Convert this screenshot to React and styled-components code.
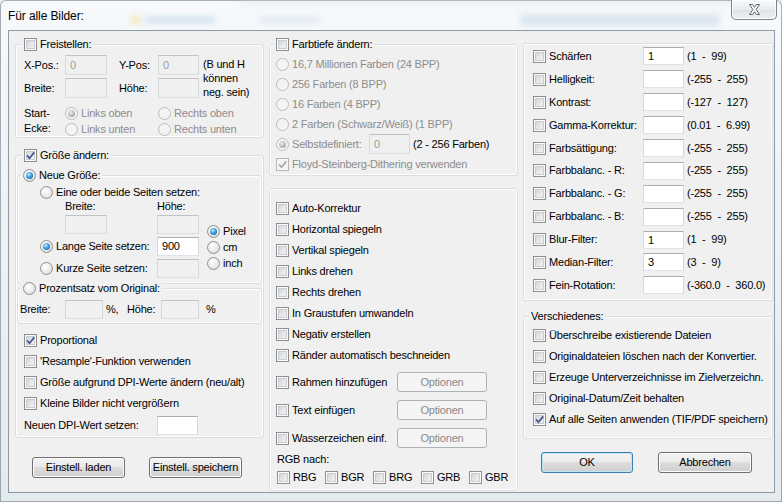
import React from 'react';
import styled, { createGlobalStyle } from 'styled-components';

const GlobalStyle = createGlobalStyle`
  html, body { margin: 0; padding: 0; }
  body {
    font-family: "Liberation Sans", Arial, sans-serif;
    font-size: 11px;
    line-height: 13px;
    letter-spacing: -0.2px;
    color: #000;
    background: #e9eef2;
  }
`;

const Window = styled.div`
    position: relative;
    width: 782px;
    height: 502px;
    overflow: hidden;
    border-radius: 6px 6px 0 0;
    background: linear-gradient(180deg, #f7f9fb 0%, #eef3f6 40%, #e3ebef 100%);
    box-shadow: inset 0 0 0 1px rgba(70, 80, 90, 0.45);
    display: flex;
    flex-direction: column;
`;

const Backdrop = styled.div`
    position: absolute;
    inset: 0 0 auto 0;
    height: 30px;
    pointer-events: none;
`;

const Blur = styled.span`
    position: absolute;
    left: ${(p) => p.$x}px;
    top: ${(p) => p.$y}px;
    width: ${(p) => p.$w}px;
    height: ${(p) => p.$h}px;
    background: ${(p) => p.$c};
    filter: blur(3px);
    opacity: 0.5;
`;

const TitleBar = styled.div`
    position: relative;
    height: 30px;
    display: flex;
    align-items: flex-start;
    justify-content: space-between;
    padding-left: 8px;
    flex: none;
`;

const Title = styled.div`
    margin-top: 9px;
    font-size: 12px;
    line-height: 14px;
    letter-spacing: -0.1px;
`;

const CloseButton = styled.div`
    box-sizing: border-box;
    width: 46px;
    height: 20px;
    margin-right: 5px;
    border: 1px solid #7d8590;
    border-top: none;
    border-radius: 0 0 5px 5px;
    background: linear-gradient(180deg, #f8f9fa 0%, #e9ecef 50%, #dde2e7 51%, #eef1f4 100%);
    box-shadow: inset 0 0 0 1px rgba(255, 255, 255, 0.8);
    display: flex;
    align-items: center;
    justify-content: center;
`;

const Client = styled.div`
    box-sizing: border-box;
    height: 463px;
    margin: 0 7px 0 8px;
    border: 1px solid #8e9aa6;
    background: #f0f0f0;
    display: grid;
    grid-template-columns: 249px 249px 250px;
    column-gap: 5px;
    padding-left: 6px;
    align-items: start;
`;

const Column = styled.div`
    display: flex;
    flex-direction: column;
    padding-top: ${(p) => p.$pt}px;
`;

const Group = styled.div`
    box-sizing: border-box;
    height: ${(p) => p.$h}px;
    margin: ${(p) => p.$m || '0'};
    padding-top: ${(p) => p.$pt || 0}px;
    border: 1px solid #d5dfe5;
    border-radius: 3px;
    box-shadow: inset 0 0 0 1px #ffffff;
    display: flex;
    flex-direction: column;
    flex: none;
`;

const Legend = styled.div`
    display: flex;
    align-items: center;
    height: 14px;
    width: fit-content;
    margin: -8px 0 0 ${(p) => p.$ml}px;
    padding: 0 2px;
    background: #f0f0f0;
    white-space: nowrap;
`;

const Stack = styled.div`
    display: flex;
    flex-direction: column;
    margin-top: ${(p) => p.$mt || 0}px;
    padding-left: ${(p) => p.$pl || 0}px;
    padding-top: ${(p) => p.$pt || 0}px;
`;

const Line = styled.div`
    display: flex;
    align-items: center;
    height: ${(p) => p.$h}px;
    margin-top: ${(p) => p.$mt || 0}px;
    padding-left: ${(p) => p.$pl || 0}px;
    flex: none;
`;

const Choice = styled.span`
    display: inline-flex;
    align-items: center;
    gap: 3px;
    white-space: nowrap;
    color: ${(p) => (p.$off ? '#8d8d8d' : '#000')};
    width: ${(p) => (p.$w ? `${p.$w}px` : 'auto')};
    grid-area: ${(p) => p.$area || 'auto'};
    flex: none;
`;

const Box = styled.span`
    box-sizing: border-box;
    width: 13px;
    height: 13px;
    flex: none;
    border: 1px solid ${(p) => (p.$off ? '#b5b5b5' : '#8e8f8f')};
    background: ${(p) =>
        p.$off ? '#f4f4f4' : 'linear-gradient(135deg, #c5c9cf 0%, #e2e4e7 45%, #f8f8f8 100%)'};
    box-shadow: ${(p) =>
        p.$off ? 'inset 0 0 0 1px #f7f7f7' : 'inset 0 0 0 1px #fbfbfb, inset 0 0 0 2px #c9ccd1'};
    display: flex;
    align-items: center;
    justify-content: center;
`;

const Dot = styled.span`
    box-sizing: border-box;
    width: 13px;
    height: 13px;
    flex: none;
    border-radius: 50%;
    border: 1px solid ${(p) => (p.$off ? '#bcbcbc' : '#8e8f8f')};
    background: ${(p) =>
        p.$off ? '#f4f4f4' : 'radial-gradient(circle at 40% 35%, #ffffff 0%, #ececec 50%, #cfd1d4 100%)'};
    display: flex;
    align-items: center;
    justify-content: center;

    &::after {
        content: '';
        display: ${(p) => (p.$on ? 'block' : 'none')};
        width: 7px;
        height: 7px;
        border-radius: 50%;
        background: ${(p) =>
            p.$off
                ? 'radial-gradient(circle at 40% 35%, #eeeeee 0%, #b4b4b4 60%, #8f8f8f 100%)'
                : 'radial-gradient(circle at 40% 35%, #c6ecff 0%, #3f9ede 45%, #154f8c 100%)'};
    }
`;

const Field = styled.input.attrs({ readOnly: true })`
    box-sizing: border-box;
    width: ${(p) => p.$w}px;
    height: ${(p) => p.$h || 20}px;
    margin: 0 0 0 ${(p) => p.$ml || 0}px;
    padding: 0 0 0 4px;
    font: inherit;
    letter-spacing: inherit;
    color: ${(p) => (p.$off ? '#9a9a9a' : '#000')};
    border: 1px solid;
    border-color: ${(p) =>
        p.$off ? '#bfc3c7 #d6d9dc #dcdfe2 #d6d9dc' : '#abadb3 #d5d8dd #dfe3e8 #d5d8dd'};
    background: ${(p) => (p.$off ? '#f0f0f0' : '#ffffff')};
    border-radius: 0;
    outline: none;
    flex: none;
    grid-area: ${(p) => p.$area || 'auto'};
    align-self: center;
`;

const Btn = styled.button`
    box-sizing: border-box;
    width: ${(p) => p.$w}px;
    height: ${(p) => p.$h || 21}px;
    margin: 0 0 0 ${(p) => p.$ml || 0}px;
    padding: 0;
    font: inherit;
    letter-spacing: inherit;
    color: ${(p) => (p.$off ? '#8a8a8a' : '#000')};
    border: 1px solid ${(p) => (p.$off ? '#adb2b5' : p.$default ? '#3c7fb1' : '#707070')};
    border-radius: 3px;
    background: ${(p) =>
        p.$off ? '#f4f4f4' : 'linear-gradient(180deg, #f2f2f2 0%, #ebebeb 49%, #dddddd 50%, #cfcfcf 100%)'};
    box-shadow: inset 0 0 0 1px ${(p) => (p.$off ? '#f4f4f4' : p.$default ? '#bfe6f8' : '#fcfcfc')};
    flex: none;
`;

const ButtonRow = styled.div`
    display: flex;
    gap: ${(p) => p.$gap}px;
    margin-top: ${(p) => p.$mt}px;
    padding-left: ${(p) => p.$pl}px;
`;

const Cell = styled.span`
    grid-area: ${(p) => p.$area || 'auto'};
    white-space: nowrap;
    width: ${(p) => (p.$w ? `${p.$w}px` : 'auto')};
    padding-left: ${(p) => p.$pl || 0}px;
    flex: none;
`;

const CropGrid = styled.div`
    display: grid;
    margin-top: 4px;
    padding-left: 8px;
    grid-template-columns: 41px 42px 12px 39px 41px 1fr;
    grid-template-rows: 20px 20px;
    row-gap: 3px;
    grid-template-areas:
        'xl xi . yl yi note'
        'bl bi . hl hi note';
    align-items: center;
`;

const Note = styled.div`
    grid-area: note;
    align-self: start;
    padding: 2px 0 0 4px;
    line-height: 14px;
    white-space: nowrap;
`;

const StartGrid = styled.div`
    display: grid;
    margin-top: 7px;
    padding-left: 8px;
    grid-template-columns: 41px 93px 1fr;
    grid-template-rows: 16px 16px;
    grid-template-areas:
        'lbl lo ro'
        'lbl lu ru';
    align-items: center;
`;

const StartLabel = styled.div`
    grid-area: lbl;
    line-height: 15px;
    align-self: start;
    padding-top: 1px;
`;

const SizeGrid = styled.div`
    display: grid;
    margin-top: 3px;
    padding-left: 22px;
    grid-template-columns: 25px 92px 42px 8px 1fr;
    grid-template-rows: 14px 14px 22px 22px 22px;
    grid-template-areas:
        'one one one one one'
        '. bl hl . .'
        '. bi hi . units'
        'long long li . units'
        'short short si . units';
    align-items: center;
`;

const Units = styled.div`
    grid-area: units;
    align-self: start;
    display: flex;
    flex-direction: column;
    padding-top: 10px;
`;

const UnitLine = styled.div`
    height: 16px;
    display: flex;
    align-items: center;
`;

const Sub = styled(Group)`
    margin: ${(p) => p.$mt}px 1px 0 1px;
`;

const Caption = styled.div`
    height: ${(p) => p.$h}px;
    display: flex;
    align-items: center;
    padding-left: ${(p) => p.$pl}px;
`;

const Tick = ({ off }) => (
    <svg width="9" height="9" viewBox="0 0 9 9">
        <path
            d="M1 4.4 L3.5 7.2 L8.2 1.4"
            fill="none"
            stroke={off ? '#a9a9a9' : '#42558a'}
            strokeWidth="1.7"
        />
    </svg>
);

const Check = ({ on, off, w, area, children }) => (
    <Choice $off={off} $w={w} $area={area}>
        <Box $off={off}>{on && <Tick off={off} />}</Box>
        {children}
    </Choice>
);

const Radio = ({ on, off, w, area, children }) => (
    <Choice $off={off} $w={w} $area={area}>
        <Dot $on={on} $off={off} />
        {children}
    </Choice>
);

const CloseGlyph = () => (
    <svg width="13" height="11" viewBox="0 0 13 11">
        <path
            d="M1.5 0.5 L4.6 0.5 L6.5 3.3 L8.4 0.5 L11.5 0.5 L8.1 5.5 L11.5 10.5 L8.4 10.5 L6.5 7.7 L4.6 10.5 L1.5 10.5 L4.9 5.5 Z"
            fill="#ffffff"
            stroke="#5d6672"
            strokeWidth="1"
            strokeLinejoin="round"
        />
    </svg>
);

const filters = [
    ['Schärfen', '1', '(1  -  99)'],
    ['Helligkeit:', '', '(-255  -  255)'],
    ['Kontrast:', '', '(-127  -  127)'],
    ['Gamma-Korrektur:', '', '(0.01  -  6.99)'],
    ['Farbsättigung:', '', '(-255  -  255)'],
    ['Farbbalanc. - R:', '', '(-255  -  255)'],
    ['Farbbalanc. - G:', '', '(-255  -  255)'],
    ['Farbbalanc. - B:', '', '(-255  -  255)'],
    ['Blur-Filter:', '1', '(1  -  99)'],
    ['Median-Filter:', '3', '(3  -  9)'],
    ['Fein-Rotation:', '', '(-360.0  -  360.0)'],
];

const actions = [
    'Auto-Korrektur',
    'Horizontal spiegeln',
    'Vertikal spiegeln',
    'Links drehen',
    'Rechts drehen',
    'In Graustufen umwandeln',
    'Negativ erstellen',
    'Ränder automatisch beschneiden',
];

const depths = [
    '16,7 Millionen Farben (24 BPP)',
    '256 Farben (8 BPP)',
    '16 Farben (4 BPP)',
    '2 Farben (Schwarz/Weiß) (1 BPP)',
];

const misc = [
    ['Überschreibe existierende Dateien', false],
    ['Originaldateien löschen nach der Konvertier.', false],
    ['Erzeuge Unterverzeichnisse im Zielverzeichn.', false],
    ['Original-Datum/Zeit behalten', false],
    ['Auf alle Seiten anwenden (TIF/PDF speichern)', true],
];

const App = () => {
    return (
        <>
            <GlobalStyle />
            <Window>
                <Backdrop>
                    <Blur $x={132} $y={16} $w={8} $h={8} $c="#e8d46a" />
                    <Blur $x={145} $y={17} $w={70} $h={6} $c="#a9c6e6" />
                    <Blur $x={260} $y={17} $w={60} $h={6} $c="#c7d6e6" />
                    <Blur $x={520} $y={14} $w={200} $h={12} $c="#c2d4e6" />
                    <Blur $x={240} $y={0} $w={540} $h={4} $c="#d5dde6" />
                </Backdrop>
                <TitleBar>
                    <Title>Für alle Bilder:</Title>
                    <CloseButton>
                        <CloseGlyph />
                    </CloseButton>
                </TitleBar>
                <Client>
                    {/* left column */}
                    <Column $pt={13}>
                        <Group $h={94}>
                            <Legend $ml={6}>
                                <Check>Freistellen:</Check>
                            </Legend>
                            <CropGrid>
                                <Cell $area="xl">X-Pos.:</Cell>
                                <Field $area="xi" $w={42} $off defaultValue="0" />
                                <Cell $area="yl">Y-Pos:</Cell>
                                <Field $area="yi" $w={41} $off defaultValue="0" />
                                <Note>
                                    (B und H
                                    <br />
                                    können
                                    <br />
                                    neg. sein)
                                </Note>
                                <Cell $area="bl">Breite:</Cell>
                                <Field $area="bi" $w={42} $off defaultValue="" />
                                <Cell $area="hl">Höhe:</Cell>
                                <Field $area="hi" $w={41} $off defaultValue="" />
                            </CropGrid>
                            <StartGrid>
                                <StartLabel>
                                    Start-
                                    <br />
                                    Ecke:
                                </StartLabel>
                                <Radio area="lo" on off>
                                    Links oben
                                </Radio>
                                <Radio area="ro" off>
                                    Rechts oben
                                </Radio>
                                <Radio area="lu" off>
                                    Links unten
                                </Radio>
                                <Radio area="ru" off>
                                    Rechts unten
                                </Radio>
                            </StartGrid>
                        </Group>

                        <Group $h={283} $m="17px 0 0 0">
                            <Legend $ml={6}>
                                <Check on>Größe ändern:</Check>
                            </Legend>
                            <Sub $h={109} $mt={13}>
                                <Legend $ml={3}>
                                    <Radio on>Neue Größe:</Radio>
                                </Legend>
                                <SizeGrid>
                                    <Radio area="one">Eine oder beide Seiten setzen:</Radio>
                                    <Cell $area="bl">Breite:</Cell>
                                    <Cell $area="hl">Höhe:</Cell>
                                    <Field $area="bi" $w={42} $h={19} $off defaultValue="" />
                                    <Field $area="hi" $w={42} $h={19} $off defaultValue="" />
                                    <Radio area="long" on>
                                        Lange Seite setzen:
                                    </Radio>
                                    <Field $area="li" $w={42} $h={19} defaultValue="900" />
                                    <Radio area="short">Kurze Seite setzen:</Radio>
                                    <Field $area="si" $w={42} $h={19} $off defaultValue="" />
                                    <Units>
                                        <UnitLine>
                                            <Radio on>Pixel</Radio>
                                        </UnitLine>
                                        <UnitLine>
                                            <Radio>cm</Radio>
                                        </UnitLine>
                                        <UnitLine>
                                            <Radio>inch</Radio>
                                        </UnitLine>
                                    </Units>
                                </SizeGrid>
                            </Sub>
                            <Sub $h={36} $mt={4}>
                                <Legend $ml={3}>
                                    <Radio>Prozentsatz vom Original:</Radio>
                                </Legend>
                                <Line $h={20} $mt={4} $pl={2}>
                                    <Cell $w={45}>Breite:</Cell>
                                    <Field $w={38} $h={19} $off defaultValue="" />
                                    <Cell $w={21} $pl={3}>
                                        %,
                                    </Cell>
                                    <Cell $w={34}>Höhe:</Cell>
                                    <Field $w={38} $h={19} $off defaultValue="" />
                                    <Cell $pl={7}>%</Cell>
                                </Line>
                            </Sub>
                            <Stack $mt={6} $pl={8}>
                                <Line $h={21}>
                                    <Check on>Proportional</Check>
                                </Line>
                                <Line $h={21}>
                                    <Check>'Resample'-Funktion verwenden</Check>
                                </Line>
                                <Line $h={21}>
                                    <Check>Größe aufgrund DPI-Werte ändern (neu/alt)</Check>
                                </Line>
                                <Line $h={21}>
                                    <Check>Kleine Bilder nicht vergrößern</Check>
                                </Line>
                                <Line $h={21} $mt={1}>
                                    <Cell $w={133}>Neuen DPI-Wert setzen:</Cell>
                                    <Field $w={41} $h={19} defaultValue="" />
                                </Line>
                            </Stack>
                        </Group>

                        <ButtonRow $gap={24} $mt={19} $pl={17}>
                            <Btn $w={93}>Einstell. laden</Btn>
                            <Btn $w={93}>Einstell. speichern</Btn>
                        </ButtonRow>
                    </Column>

                    {/* middle column */}
                    <Column $pt={13}>
                        <Group $h={132}>
                            <Legend $ml={4}>
                                <Check>Farbtiefe ändern:</Check>
                            </Legend>
                            <Stack $mt={3} $pl={6}>
                                {depths.map((d) => (
                                    <Line $h={20} key={d}>
                                        <Radio off>{d}</Radio>
                                    </Line>
                                ))}
                                <Line $h={20}>
                                    <Radio on off w={93}>
                                        Selbstdefiniert:
                                    </Radio>
                                    <Field $w={41} $off defaultValue="0" />
                                    <Cell $pl={3}>(2 - 256 Farben)</Cell>
                                </Line>
                                <Line $h={20}>
                                    <Check on off>
                                        Floyd-Steinberg-Dithering verwenden
                                    </Check>
                                </Line>
                            </Stack>
                        </Group>

                        <Group $h={303} $m="12px 0 0 0">
                            <Stack $pt={9} $pl={6}>
                                {actions.map((a) => (
                                    <Line $h={21} key={a}>
                                        <Check>{a}</Check>
                                    </Line>
                                ))}
                                <Line $h={28} $mt={2}>
                                    <Check w={121}>Rahmen hinzufügen</Check>
                                    <Btn $w={90} $h={20} $off>
                                        Optionen
                                    </Btn>
                                </Line>
                                <Line $h={28}>
                                    <Check w={121}>Text einfügen</Check>
                                    <Btn $w={90} $h={20} $off>
                                        Optionen
                                    </Btn>
                                </Line>
                                <Line $h={28}>
                                    <Check w={121}>Wasserzeichen einf.</Check>
                                    <Btn $w={90} $h={20} $off>
                                        Optionen
                                    </Btn>
                                </Line>
                            </Stack>
                            <Caption $h={14} $pl={7}>
                                RGB nach:
                            </Caption>
                            <Line $h={14} $mt={4} $pl={7}>
                                {['RBG', 'BGR', 'BRG', 'GRB', 'GBR'].map((c) => (
                                    <Check key={c} w={48}>
                                        {c}
                                    </Check>
                                ))}
                            </Line>
                        </Group>
                    </Column>

                    {/* right column */}
                    <Column $pt={12}>
                        <Group $h={258} $pt={1}>
                            <Stack $pl={9}>
                                {filters.map(([label, value, range]) => (
                                    <Line $h={22.9} key={label}>
                                        <Check w={110}>{label}</Check>
                                        <Field $w={41} $h={18} defaultValue={value} />
                                        <Cell $pl={3} style={{ whiteSpace: 'pre' }}>
                                            {range}
                                        </Cell>
                                    </Line>
                                ))}
                            </Stack>
                        </Group>

                        <Group $h={123} $m="15px 0 0 0">
                            <Legend $ml={5}>Verschiedenes:</Legend>
                            <Stack $mt={2} $pl={9}>
                                {misc.map(([label, on]) => (
                                    <Line $h={21} key={label}>
                                        <Check on={on}>{label}</Check>
                                    </Line>
                                ))}
                            </Stack>
                        </Group>

                        <ButtonRow $gap={25} $mt={13} $pl={18}>
                            <Btn $w={92} $default>
                                OK
                            </Btn>
                            <Btn $w={94}>Abbrechen</Btn>
                        </ButtonRow>
                    </Column>
                </Client>
            </Window>
        </>
    );
};

export default App;
